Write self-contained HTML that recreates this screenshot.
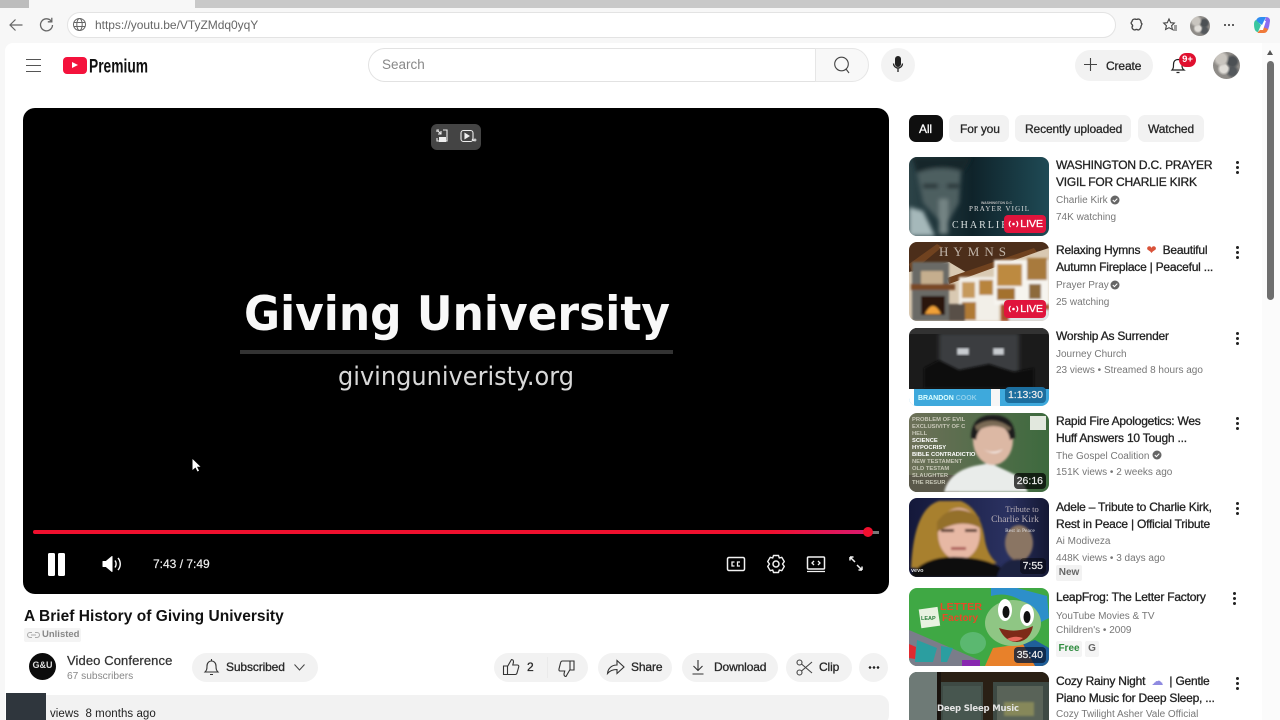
<!DOCTYPE html>
<html lang="en"><head><meta charset="utf-8"><title>A Brief History of Giving University</title>
<style>
*{box-sizing:border-box}
html,body{margin:0;padding:0;width:1280px;height:720px;overflow:hidden;background:#fff}
#w{position:relative;width:1280px;height:720px;overflow:hidden;background:#f7f7f7;font-family:"Liberation Sans",sans-serif;color:#0f0f0f}
.a{position:absolute}
.t{position:absolute;white-space:nowrap;line-height:1}
.m{font-size:12px;-webkit-text-stroke:.3px currentColor;letter-spacing:-.13px;color:#282828}
.pill{position:absolute;background:#f2f2f2;border-radius:18px}
.th{position:absolute;left:909px;width:140px;border-radius:8px;overflow:hidden}
.th svg{display:block}
.title{position:absolute;left:1056px;font-size:12px;-webkit-text-stroke:.3px #222;letter-spacing:-.22px;line-height:16.8px;color:#222;white-space:nowrap}
.sub{position:absolute;left:1056px;font-size:10px;color:#777;white-space:nowrap;line-height:1}
.dots{position:absolute;width:3px;height:13px}
.dots i{position:absolute;left:0;width:3px;height:3px;border-radius:50%;background:#222}
.dots i:nth-child(1){top:0}.dots i:nth-child(2){top:5px}.dots i:nth-child(3){top:10px}
.dur{position:absolute;background:rgba(0,0,0,.72);color:#eee;font-size:10.500px;-webkit-text-stroke:.2px #eee;border-radius:4px;padding:2px 3px;line-height:12px}
.live{position:absolute;background:#e0143c;color:#fff;font-size:10.500px;-webkit-text-stroke:.3px #fff;border-radius:4px;line-height:18px;height:18px;width:42px;text-align:right;padding-right:3px}
.live svg{position:absolute;left:4px;top:5px}
.av{background:radial-gradient(circle at 30% 25%,#c9c5bf 0 18%,transparent 30%),radial-gradient(circle at 72% 35%,#4c5054 0 16%,transparent 28%),radial-gradient(circle at 40% 62%,#e0ddd8 0 16%,transparent 28%),radial-gradient(circle at 72% 72%,#54585c 0 14%,transparent 26%),#8e8b87;border-radius:50%}
svg{overflow:visible}
</style></head><body><div id="w">
<!-- browser chrome -->
<div class="a" style="left:0;top:0;width:1280px;height:8px;background:#c9c9c9"></div>
<div class="a" style="left:29px;top:0;width:166px;height:8px;background:#f7f7f7"></div>
<div class="a" style="left:0;top:0;width:29px;height:8px;background:#bdbdbd"></div>
<svg class="a" style="left:8px;top:17px" width="18" height="16" fill="none" stroke="#666" stroke-width="1.200"><path d="M14.500 8H2M7.500 2.500 2 8l5.500 5.500"/></svg>
<svg class="a" style="left:38px;top:16px" width="17" height="17" fill="none" stroke="#666" stroke-width="1.300"><path d="M13.500 5.500A6 6 0 1 0 14.500 9"/><path d="M13.800 1.800v4h-4"/></svg>
<div class="a" style="left:67px;top:12px;width:1049px;height:26px;background:#fff;border:1px solid #e3e3e3;border-radius:13px"></div>
<svg class="a" style="left:72px;top:17px" width="15" height="15" fill="none" stroke="#666" stroke-width="1"><circle cx="7.500" cy="7.500" r="6"/><ellipse cx="7.500" cy="7.500" rx="2.700" ry="6"/><path d="M1.500 5.500h12M1.500 9.500h12"/></svg>
<div class="t" style="left:95px;top:19px;font-size:12px;letter-spacing:-.03px;color:#666">https://youtu.be/VTyZMdq0yqY</div>
<svg class="a" style="left:1129px;top:17px" width="15" height="16" fill="none" stroke="#444" stroke-width="1.300"><path d="M6 2c1 .5 2 .5 3 0 1.500 0 2.500 1 3 2.500-.2 1 .2 1.700 1 2.500-.5 1-.8 1.500-1 2.500 0 1.500-1.500 3.500-3 3.500-1-.7-2-.7-3 0-1.800 0-3-1.500-3-3 .8-.8.800-1.700 0-2.500-1.200-1-1.200-2 0-3 .2-1.500 1-2.500 3-2.500z"/></svg>
<svg class="a" style="left:1162px;top:17px" width="16" height="16" fill="none" stroke="#444" stroke-width="1.100"><path d="M7 2l1.700 3.700 3.600.4-2.700 2.600.8 3.800L7 10.700 3.600 12.500l.8-3.800L1.700 6.100l3.600-.4z"/><path d="M12 9h3M12 11h3M11 13h4"/></svg>
<div class="a av" style="left:1190px;top:16px;width:20px;height:20px"></div>
<div class="a" style="left:1223px;top:24px;width:12px;height:2px;background:radial-gradient(circle,#444 0 1px,transparent 1.100px) 0 0/4px 2px"></div>
<svg class="a" style="left:1253px;top:16px" width="18" height="19"><path d="M3 5Q4 1 8 1h5L9 9z" fill="#2f8df0"/><path d="M13 1q4 0 4 4-.500 5-2 9l-5-2z" fill="#8b6cf0"/><path d="M1 8q0-3 2-4l5 5-3 7q-4 0-4-8z" fill="#39c6a0"/><path d="M5 17q-1 0 0-1l5-5 5 2q-1 4-4 4z" fill="#f07a3a"/><path d="M7 14 11 5h2l-3 9z" fill="#fff"/></svg>
<!-- page -->
<div class="a" style="left:5px;top:43px;width:1275px;height:677px;background:#fff;border-radius:8px 0 0 0"></div>
<!-- scrollbar -->
<div class="a" style="left:1262px;top:43px;width:18px;height:677px;background:#fbfbfb"></div>
<div class="a" style="left:1267px;top:50px;width:0;height:0;border-left:3.500px solid transparent;border-right:3.500px solid transparent;border-bottom:5px solid #555"></div>
<div class="a" style="left:1267px;top:61px;width:7px;height:239px;background:#6e6e6e;border-radius:4px"></div>
<!-- masthead -->
<div class="a" style="left:26px;top:59px;width:15px;height:1px;background:#555"></div>
<div class="a" style="left:26px;top:65px;width:15px;height:1px;background:#555"></div>
<div class="a" style="left:26px;top:71px;width:15px;height:1px;background:#555"></div>
<div class="a" style="left:63px;top:57px;width:24px;height:17px;background:#f4123c;border-radius:4px"></div>
<div class="a" style="left:72px;top:62px;width:0;height:0;border-left:6px solid #fff;border-top:3.500px solid transparent;border-bottom:3.500px solid transparent"></div>
<svg class="a" style="left:89px;top:55px" width="62" height="24"><text x="0" y="17.500" font-family="Liberation Sans" font-weight="bold" font-size="19" textLength="59" lengthAdjust="spacingAndGlyphs" fill="#111">Premium</text></svg>
<div class="a" style="left:368px;top:48px;width:448px;height:34px;border:1px solid #e2e2e2;border-right:0;border-radius:17px 0 0 17px"></div>
<div class="t" style="left:382px;top:58px;font-size:13.500px;color:#888">Search</div>
<div class="a" style="left:815px;top:48px;width:54px;height:34px;border:1px solid #e6e6e6;background:#f8f8f8;border-radius:0 17px 17px 0"></div>
<svg class="a" style="left:832px;top:55px" width="20" height="20" fill="none" stroke="#444" stroke-width="1.100"><circle cx="9.500" cy="9" r="6.800"/><path d="M14 14l3 4"/></svg>
<div class="a" style="left:881px;top:48px;width:34px;height:34px;border-radius:50%;background:#f3f3f3"></div>
<svg class="a" style="left:892px;top:55px" width="12" height="20"><rect x="3" y="1" width="6" height="11" rx="3" fill="#222"/><path d="M1.500 8.500a4.500 4.500 0 0 0 9 0M6 13v4" fill="none" stroke="#222" stroke-width="1.300"/></svg>
<div class="pill" style="left:1075px;top:50px;width:78px;height:31px"></div>
<svg class="a" style="left:1083px;top:57px" width="15" height="15" stroke="#444" stroke-width="1.100"><path d="M7.500 1v13M1 7.500h13"/></svg>
<div class="t m" style="left:1106px;top:60px">Create</div>
<svg class="a" style="left:1169px;top:56px" width="18" height="19" fill="none" stroke="#222" stroke-width="1.200"><path d="M3 14c1.500-1.500 1.500-3 1.500-5.500C4.500 5 6.500 3.500 9 3.500s4 1.500 4 5c0 2.500 0 4 2 5.500zM7.500 16.500h3"/></svg>
<div class="a" style="left:1179px;top:53px;width:17px;height:14px;background:#e0102f;border-radius:7px;color:#fff;font-size:9.500px;font-weight:bold;text-align:center;line-height:14px">9+</div>
<div class="a av" style="left:1213px;top:52px;width:27px;height:27px"></div>
<!-- player -->
<div class="a" style="left:23px;top:108px;width:866px;height:486px;background:#000;border-radius:12px"></div>
<div class="a" style="left:431px;top:124px;width:50px;height:26px;background:#444;border-radius:6px"></div>
<svg class="a" style="left:434px;top:128px" width="44" height="18" fill="none" stroke="#eee" stroke-width="1.100"><path d="M3 4V2h2M9 2h4v11h-3M3 10v3h2"/><rect x="5" y="9" width="7" height="5" fill="#eee" stroke="none"/><path d="M4 3l3 3M7 3v3H4"/><rect x="27" y="2.500" width="12" height="11" rx="2.500"/><path d="M31 5.500v5l4-2.500z" fill="#eee"/><path d="M38 11l2 2M41 10.500v3M39.500 12h3"/></svg>
<svg class="a" style="left:220px;top:280px" width="480" height="120">
<text x="24" y="50" font-family="DejaVu Sans" font-weight="bold" font-size="47" textLength="426" lengthAdjust="spacingAndGlyphs" fill="#f8f8f8">Giving University</text>
<rect x="20" y="70" width="433" height="4" fill="#333"/>
<text x="118" y="105" font-family="DejaVu Sans" font-size="26" textLength="236" lengthAdjust="spacingAndGlyphs" fill="#d8d8d8">givinguniveristy.org</text>
</svg>
<svg class="a" style="left:189px;top:458px" width="12" height="15"><path d="M3.500 1v11l3-2.500 2 4 1.500-.7-2-4h3.500z" fill="#fff"/></svg>
<div class="a" style="left:33px;top:530px;width:836px;height:4px;background:linear-gradient(90deg,#f0102e 0 88%,#d81a70 100%);border-radius:2px"></div>
<div class="a" style="left:869px;top:531px;width:10px;height:2.500px;background:#777"></div>
<div class="a" style="left:863px;top:527px;width:10px;height:10px;border-radius:50%;background:#f0102e"></div>
<div class="a" style="left:48px;top:553px;width:7px;height:23px;background:#fff;border-radius:1.500px"></div>
<div class="a" style="left:58px;top:553px;width:7px;height:23px;background:#fff;border-radius:1.500px"></div>
<svg class="a" style="left:102px;top:555px" width="21" height="18"><path d="M1 6.500h3L10 1.500v15L4 11.500H1z" fill="#fff" stroke="#fff" stroke-linejoin="round"/><path d="M13 5.500c1.500 2 1.500 5 0 7M16 3c3 3.500 3 8.500 0 12" fill="none" stroke="#fff" stroke-width="1.400"/></svg>
<div class="t" style="left:153px;top:558px;font-size:12px;-webkit-text-stroke:.2px #eee;color:#eee">7:43 / 7:49</div>
<svg class="a" style="left:725px;top:554px" width="144" height="20" fill="none" stroke="#f2f2f2" stroke-width="1.500">
<rect x="2.500" y="3.500" width="17" height="13" rx="1.500"/>
<path d="M9.500 8H7v4h2.500M15 8h-2.500v4H15" stroke-width="1.300"/>
<path d="M48.500 1.500h5l.8 2.500 2.500-.7 2.500 4.300-1.800 2.400 1.800 2.400-2.500 4.300-2.500-.7-.8 2.500h-5l-.8-2.500-2.500.7-2.500-4.300 1.800-2.400-1.800-2.400 2.500-4.300 2.500.7z" stroke-width="1.400" stroke-linejoin="round"/>
<circle cx="51" cy="10" r="3"/>
<rect x="82.500" y="3" width="17" height="12" rx="1"/><path d="M82 17.500h18M89 7l-2 2 2 2M93 7l2 2-2 2" stroke-width="1.300"/>
<path d="M125 3l5 5M125 3h3.500M125 3v3.500M137 16l-5-5M137 16h-3.500M137 16v-3.500" stroke-width="1.500"/>
</svg>
<!-- below player -->
<div class="t" style="left:24px;top:609px;font-size:15.500px;font-weight:bold;color:#111;letter-spacing:.03px">A Brief History of Giving University</div>
<div class="a" style="left:24px;top:628px;width:57px;height:14px;background:#f4f4f4;border-radius:2px"></div>
<svg class="a" style="left:27px;top:631px" width="13" height="8" fill="none" stroke="#aaa" stroke-width="1"><path d="M5 1.500H3a2.500 2.500 0 0 0 0 5h2M8 1.500h2a2.500 2.500 0 0 1 0 5H8M4 4h5"/></svg>
<div class="t" style="left:42px;top:630px;font-size:9.500px;font-weight:bold;color:#888">Unlisted</div>
<div class="a" style="left:29px;top:653px;width:27px;height:27px;border-radius:50%;background:#0b0b0b;color:#ddd;font-size:9px;font-weight:bold;text-align:center;line-height:25px">G&amp;U</div>
<div class="t" style="left:67px;top:654px;font-size:13px;letter-spacing:.1px;color:#333;-webkit-text-stroke:.25px #333">Video Conference</div>
<div class="t" style="left:67px;top:671px;font-size:10.200px;color:#888;margin-top:1px">67 subscribers</div>
<div class="pill" style="left:192px;top:653px;width:126px;height:29px"></div>
<svg class="a" style="left:203px;top:658px" width="17" height="20" fill="none" stroke="#333" stroke-width="1.100"><path d="M2 14c1.500-1.500 2-2.500 2-6 0-3 2-5 4.500-5s4.500 2 4.500 5c0 3.500.5 4.500 2 6zM8.500 1v2M7 16.500h3"/></svg>
<div class="t m" style="left:226px;top:661px">Subscribed</div>
<svg class="a" style="left:293px;top:663px" width="13" height="9" fill="none" stroke="#444" stroke-width="1"><path d="M1.500 1.500 6.500 7l5-5.500"/></svg>
<div class="pill" style="left:494px;top:653px;width:94px;height:29px"></div>
<div class="a" style="left:547px;top:657px;width:1px;height:21px;background:#eaeaea"></div>
<svg class="a" style="left:502px;top:658px" width="18" height="18" fill="none" stroke="#333" stroke-width="1.100"><path d="M1.500 8h4v8.500h-4zM5.500 8.500 9.500 1.500c1.500 0 2 1 2 2.500l-.7 3h4.700c1 0 1.500 1 1.200 2l-1.700 6c-.2.800-.8 1.500-1.800 1.500H5.500"/></svg>
<div class="t m" style="left:527px;top:661px">2</div>
<svg class="a" style="left:558px;top:660px" width="17" height="18" fill="none" stroke="#333" stroke-width="1.100"><path d="M12 1h4v9h-4zM12 9.500 8 16.500c-1.500 0-2-1-2-2.500l.7-3H2c-1 0-1.200-1-1-2l1.500-6C2.700 2 3.300 1 4.500 1H12"/></svg>
<div class="pill" style="left:598px;top:653px;width:74px;height:29px"></div>
<svg class="a" style="left:606px;top:659px" width="19" height="17" fill="none" stroke="#333" stroke-width="1.100"><path d="M11 1.500 18 8l-7 6.500v-4c-4 0-7 1-9.500 4 .5-5 4-8.500 9.500-8.500z"/></svg>
<div class="t m" style="left:631px;top:661px">Share</div>
<div class="pill" style="left:682px;top:653px;width:96px;height:29px"></div>
<svg class="a" style="left:691px;top:659px" width="14" height="17" fill="none" stroke="#333" stroke-width="1.100"><path d="M7 1v10M2.500 7 7 11.500 11.500 7M1.500 15h11"/></svg>
<div class="t m" style="left:714px;top:661px">Download</div>
<div class="pill" style="left:786px;top:653px;width:66px;height:29px"></div>
<svg class="a" style="left:796px;top:659px" width="17" height="17" fill="none" stroke="#444" stroke-width="1.100"><circle cx="3.500" cy="3.500" r="2.500"/><circle cx="3.500" cy="13.500" r="2.500"/><path d="M5.500 5 16 14M5.500 12 16 3"/></svg>
<div class="t m" style="left:819px;top:661px">Clip</div>
<div class="a" style="left:859px;top:653px;width:29px;height:29px;border-radius:50%;background:#f2f2f2"></div>
<div class="a" style="left:868px;top:666px;width:12px;height:3px;background:radial-gradient(circle,#222 0 1.200px,transparent 1.400px) 0 0/4px 3px"></div>
<div class="a" style="left:24px;top:695px;width:865px;height:30px;background:#f2f2f2;border-radius:10px"></div>
<div class="a" style="left:6px;top:693px;width:40px;height:27px;background:#2f363d"></div>
<div class="t" style="left:50px;top:709px;font-size:11.500px;letter-spacing:.05px;color:#222">views&nbsp; 8 months ago</div>
<!-- chips -->
<div class="a" style="left:909px;top:115px;width:34px;height:27px;background:#0f0f0f;border-radius:7px"></div>
<div class="t m" style="left:919px;top:123px;color:#fff">All</div>
<div class="a" style="left:949px;top:115px;width:60px;height:27px;background:#f2f2f2;border-radius:7px"></div>
<div class="t m" style="left:960px;top:123px">For you</div>
<div class="a" style="left:1015px;top:115px;width:116px;height:27px;background:#f2f2f2;border-radius:7px"></div>
<div class="t m" style="left:1025px;top:123px">Recently uploaded</div>
<div class="a" style="left:1138px;top:115px;width:66px;height:27px;background:#f2f2f2;border-radius:7px"></div>
<div class="t m" style="left:1148px;top:123px">Watched</div>
<!-- thumb 1 -->
<div class="th" style="top:157px;height:79px"><svg width="140" height="79">
<defs><linearGradient id="g1" x1="0" x2="1" y1="0" y2="0"><stop offset="0" stop-color="#2c4347"/><stop offset=".45" stop-color="#0f232a"/><stop offset="1" stop-color="#1f4a55"/></linearGradient><filter id="b1"><feGaussianBlur stdDeviation="2"/></filter><filter id="b2"><feGaussianBlur stdDeviation="1"/></filter></defs>
<rect width="140" height="79" fill="url(#g1)"/>
<g filter="url(#b1)"><path d="M8 16Q30 8 52 14L50 46 36 70 14 46z" fill="#4e5e60"/><path d="M3 0h60L55 14Q30 6 8 16z" fill="#16262a"/><path d="M14 27h15v4H14zM38 27h12v4H38z" fill="#1a2a2e"/><path d="M30 42h9v35h-9z" fill="#748484"/><path d="M0 50l14 4 12 25H0z" fill="#a5b8ba"/></g>
<text x="72" y="47" font-family="Liberation Sans" font-size="3.500" font-weight="bold" fill="#bbb">WASHINGTON D.C</text>
<text x="60" y="54" font-family="Liberation Serif" font-size="7" fill="#ddd" textLength="60">PRAYER VIGIL</text>
<text x="43" y="71" font-family="Liberation Serif" font-size="10" fill="#d9e0e0" letter-spacing="2">CHARLIE</text>
</svg><div class="live" style="right:3px;bottom:3px"><svg width="11" height="8" fill="none" stroke="#fff" stroke-width="1.200"><path d="M2.500 1Q0 4 2.500 7M8.500 1Q11 4 8.500 7"/><circle cx="5.500" cy="4" r="1.300" fill="#fff" stroke="none"/></svg>LIVE</div></div>
<!-- thumb 2 -->
<div class="th" style="top:242px;height:79px"><svg width="140" height="79">
<rect width="140" height="79" fill="#d9c9b2"/>
<path d="M0 0h140v6L60 32 40 20 0 30z" fill="#4c2e1a"/><path d="M0 22 28 2l5 3L3 30zM38 36 125 6l3 4-88 32z" fill="#70421f"/>
<g filter="url(#b2)"><rect x="3" y="20" width="37" height="59" fill="#6a6a66"/><rect x="12" y="29" width="22" height="16" fill="#c5ae8e"/><rect x="2" y="42" width="44" height="6" fill="#7a4a26"/><rect x="12" y="54" width="24" height="19" fill="#2a1710"/><path d="M16 72q8-16 16 0z" fill="#f0a037"/>
<rect x="50" y="35" width="40" height="44" fill="#f2efe8"/><rect x="53" y="40" width="13" height="16" fill="#c69a5b"/><rect x="70" y="38" width="14" height="15" fill="#b8843e"/><rect x="53" y="60" width="14" height="18" fill="#b07a36"/>
<rect x="85" y="18" width="55" height="45" fill="#f6f4ef"/><rect x="88" y="22" width="25" height="22" fill="#bd8a40"/><rect x="118" y="16" width="20" height="22" fill="#a87a3d"/><rect x="88" y="46" width="18" height="12" fill="#a3712e"/><rect x="120" y="42" width="12" height="15" fill="#8d6a3b"/>
<rect x="92" y="62" width="48" height="17" fill="#a8522c"/><rect x="100" y="68" width="40" height="11" fill="#dfe3e6"/><rect x="40" y="62" width="16" height="17" fill="#595046"/></g>
<text x="30" y="14" font-family="Liberation Serif" font-size="13" fill="#f0ece4" letter-spacing="5" opacity=".7">HYMNS</text>
</svg><div class="live" style="right:3px;bottom:3px"><svg width="11" height="8" fill="none" stroke="#fff" stroke-width="1.200"><path d="M2.500 1Q0 4 2.500 7M8.500 1Q11 4 8.500 7"/><circle cx="5.500" cy="4" r="1.300" fill="#fff" stroke="none"/></svg>LIVE</div></div>
<!-- thumb 3 -->
<div class="th" style="top:328px;height:78px"><svg width="140" height="78">
<rect width="140" height="61" fill="#1b1b1b"/><rect x="30" y="5" width="80" height="40" fill="#3b3e40" filter="url(#b1)"/><rect x="48" y="20" width="12" height="7" fill="#c8ccd0" filter="url(#b2)"/><rect x="84" y="20" width="11" height="7" fill="#c8ccd0" filter="url(#b2)"/><rect x="0" y="0" width="140" height="6" fill="#323232"/>
<path d="M15 60V40l15-8 20 10 30-6 25 8 20-4v20z" fill="#0a0a0a" filter="url(#b2)"/>
<rect y="61" width="140" height="17" fill="#3ea9dc"/><rect x="0" y="61" width="5" height="17" fill="#fff"/><text x="9" y="72" font-family="Liberation Sans" font-size="7" font-weight="bold" fill="#dff">BRANDON <tspan fill="#8fd0ec">COOK</tspan></text><rect x="82" y="61" width="9" height="17" fill="#f6f6f6"/>
</svg><div class="dur" style="right:3px;bottom:3px;background:#1c6e9e">1:13:30</div></div>
<!-- thumb 4 -->
<div class="th" style="top:413px;height:79px"><svg width="140" height="79">
<defs><linearGradient id="g4" x1="0" x2="1"><stop offset="0" stop-color="#6d7058"/><stop offset="1" stop-color="#3d6a3e"/></linearGradient></defs>
<rect width="140" height="79" fill="url(#g4)"/>
<rect x="0" y="62" width="50" height="17" fill="#5a584a"/>
<g font-family="Liberation Sans" font-size="5.800" font-weight="bold" fill="#c8c8b8"><text x="3" y="8">PROBLEM OF EVIL</text><text x="3" y="15">EXCLUSIVITY OF C</text><text x="3" y="22">HELL</text><text x="3" y="29" fill="#fff">SCIENCE</text><text x="3" y="36" fill="#fff">HYPOCRISY</text><text x="3" y="43" fill="#fff">BIBLE CONTRADICTIO</text><text x="3" y="50">NEW TESTAMENT</text><text x="3" y="57">OLD TESTAM</text><text x="3" y="64">SLAUGHTER</text><text x="3" y="71">THE RESUR</text></g>
<g filter="url(#b2)"><path d="M35 79q5-20 30-26l16-3 30 14 8 15z" fill="#e9ecea"/><ellipse cx="84" cy="27" rx="20" ry="25" fill="#dcb8a4"/><path d="M62 25q0-23 22-23t22 23l-5 2q-2-15-17-15T67 27z" fill="#1d1d1d"/><path d="M66 13q18-12 36 2l-2 3Q85 8 68 18z" fill="#7a6a55"/><path d="M74 36q10 6 20 0-8 8-20 0z" fill="#fff"/></g>
<rect x="121" y="3" width="16" height="14" fill="#e2e8de"/>
</svg><div class="dur" style="right:3px;bottom:3px">26:16</div></div>
<!-- thumb 5 -->
<div class="th" style="top:498px;height:79px"><svg width="140" height="79">
<defs><linearGradient id="g5" x1="0" x2="1"><stop offset="0" stop-color="#14183a"/><stop offset=".7" stop-color="#2a3160"/><stop offset="1" stop-color="#141834"/></linearGradient></defs>
<rect width="140" height="79" fill="url(#g5)"/>
<g filter="url(#b2)"><path d="M2 70Q5 10 30 3h22q20 8 24 40 3 15 12 22L50 70z" fill="#a8802f"/><ellipse cx="50" cy="36" rx="21" ry="26" fill="#e7b8a4"/><path d="M28 24q15-22 42-5 2 10 3 12-20-12-45 3z" fill="#94702a"/><path d="M0 79q15-22 50-20 40 2 50 20z" fill="#111"/>
<path d="M32 31h13v3H32zM56 31h12v3H56z" fill="#5b3d30"/><path d="M42 49h15v3H42z" fill="#ad5e5a"/>
<ellipse cx="110" cy="45" rx="14" ry="18" fill="#8a7564"/><path d="M88 79q4-18 22-18t24 18z" fill="#1c2440"/></g>
<g font-family="Liberation Serif" fill="#b5adb5" text-anchor="middle"><text x="113" y="14" font-size="8.500">Tribute to</text><text x="106" y="24" font-size="9.500">Charlie Kirk</text><text x="111" y="34" font-size="5.500" fill="#ddd">Rest in Peace</text></g>
<text x="2" y="74" font-family="Liberation Sans" font-size="5.500" font-weight="bold" fill="#ddd">vevo</text>
</svg><div class="dur" style="right:3px;bottom:3px;background:rgba(0,0,0,.45)">7:55</div></div>
<!-- thumb 6 -->
<div class="th" style="top:588px;height:78px"><svg width="140" height="78">
<rect width="140" height="78" fill="#3fa844"/>
<path d="M0 42 70 72v6H0z" fill="#7a7d8a"/>
<path d="M8 52l20 8-4 14H6zM32 58l12 2-6 14h-6z" fill="#2b9ea0"/><path d="M0 56l7 3-1 12-6-1z" fill="#e02a30"/><rect x="53" y="72" width="18" height="6" fill="#8828b0"/>
<path d="M82 0h26l30 8 2 22-8 4Q110 0 82 8z" fill="#2d8fca"/>
<path d="M84 60l42-6 14 10v14H76z" fill="#e8812a"/><path d="M114 56l12-4 14 8v18h-14z" fill="#1f5f9a"/>
<ellipse cx="104" cy="35" rx="28" ry="23" fill="#8fc684"/>
<ellipse cx="96" cy="22" rx="7" ry="11" fill="#fff"/><ellipse cx="118" cy="27" rx="7" ry="11" fill="#fff"/><ellipse cx="97" cy="24" rx="3.500" ry="6" fill="#111"/><ellipse cx="118" cy="29" rx="3.500" ry="6" fill="#111"/>
<path d="M90 40q17 6 34-2-3 15-16 16-12 0-18-14z" fill="#7d2a18"/><path d="M98 51q8-4 16-1-8 6-16 1z" fill="#e86a5c"/>
<ellipse cx="64" cy="55" rx="13" ry="11" fill="#5bb870"/>
<g font-family="Liberation Sans" font-weight="bold" fill="#e84a26"><text x="31" y="22" font-size="10.500" textLength="42">LETTER</text><text x="33" y="33" font-size="10" textLength="36">Factory</text></g>
<rect x="11" y="20" width="19" height="19" fill="#e8f2e0" transform="rotate(-8 21 30)"/><text x="12" y="32" font-family="Liberation Sans" font-weight="bold" font-size="5.500" fill="#2a7d3a">LEAP</text>
</svg><div class="dur" style="right:3px;bottom:3px;background:rgba(10,30,60,.8)">35:40</div></div>
<!-- thumb 7 -->
<div class="th" style="top:672px;height:80px"><svg width="140" height="80">
<rect width="140" height="80" fill="#3e4a44"/><rect x="0" y="0" width="28" height="80" fill="#6e7a76"/><rect x="28" y="0" width="112" height="10" fill="#2a2015"/><rect x="28" y="0" width="4" height="80" fill="#1a140f"/><rect x="74" y="10" width="10" height="70" fill="#2a2015"/><rect x="34" y="14" width="38" height="60" fill="#47564f"/><rect x="88" y="14" width="46" height="60" fill="#596358"/><rect x="95" y="30" width="30" height="14" fill="#86885a" filter="url(#b2)"/>
<text x="28" y="39" font-family="DejaVu Sans" font-weight="bold" font-size="8.500" fill="#e4e4e4" textLength="82">Deep Sleep Music</text>
</svg></div>
<!-- meta -->
<div class="title" style="top:157px">WASHINGTON D.C. PRAYER<br>VIGIL FOR CHARLIE KIRK</div>
<div class="sub" style="top:196px">Charlie Kirk</div>
<svg class="a" style="left:1110px;top:195px" width="10" height="10"><circle cx="5" cy="5" r="4.500" fill="#666"/><path d="M2.800 5l1.600 1.600 2.900-3" stroke="#fff" fill="none"/></svg>
<div class="sub" style="top:213px">74K watching</div>
<div class="dots" style="left:1236px;top:161px"><i></i><i></i><i></i></div>
<div class="title" style="top:242px">Relaxing Hymns &nbsp;<span style="color:#d9533a;-webkit-text-stroke:0">❤</span>&nbsp; Beautiful<br>Autumn Fireplace | Peaceful ...</div>
<div class="sub" style="top:281px">Prayer Pray</div>
<svg class="a" style="left:1110px;top:280px" width="10" height="10"><circle cx="5" cy="5" r="4.500" fill="#666"/><path d="M2.800 5l1.600 1.600 2.900-3" stroke="#fff" fill="none"/></svg>
<div class="sub" style="top:298px">25 watching</div>
<div class="dots" style="left:1236px;top:246px"><i></i><i></i><i></i></div>
<div class="title" style="top:328px">Worship As Surrender</div>
<div class="sub" style="top:350px">Journey Church</div>
<div class="sub" style="top:366px">23 views • Streamed 8 hours ago</div>
<div class="dots" style="left:1236px;top:332px"><i></i><i></i><i></i></div>
<div class="title" style="top:413px">Rapid Fire Apologetics: Wes<br>Huff Answers 10 Tough ...</div>
<div class="sub" style="top:452px">The Gospel Coalition</div>
<svg class="a" style="left:1152px;top:450px" width="10" height="10"><circle cx="5" cy="5" r="4.500" fill="#666"/><path d="M2.800 5l1.600 1.600 2.900-3" stroke="#fff" fill="none"/></svg>
<div class="sub" style="top:468px">151K views • 2 weeks ago</div>
<div class="dots" style="left:1236px;top:417px"><i></i><i></i><i></i></div>
<div class="title" style="top:499px">Adele – Tribute to Charlie Kirk,<br>Rest in Peace | Official Tribute</div>
<div class="sub" style="top:537px">Ai Modiveza</div>
<div class="sub" style="top:554px">448K views • 3 days ago</div>
<div class="a" style="left:1056px;top:565px;width:26px;height:16px;background:#f2f2f2;border-radius:2px;color:#666;font-size:10px;font-weight:bold;text-align:center;line-height:16px">New</div>
<div class="dots" style="left:1236px;top:502px"><i></i><i></i><i></i></div>
<div class="title" style="top:589px">LeapFrog: The Letter Factory</div>
<div class="sub" style="top:612px">YouTube Movies &amp; TV</div>
<div class="sub" style="top:626px">Children's • 2009</div>
<div class="a" style="left:1056px;top:641px;width:26px;height:16px;background:#f4f4f4;border-radius:2px;color:#2e8b3e;font-size:10px;font-weight:bold;text-align:center;line-height:16px">Free</div>
<div class="a" style="left:1085px;top:641px;width:14px;height:16px;background:#f4f4f4;border-radius:2px;color:#666;font-size:10px;font-weight:bold;text-align:center;line-height:16px">G</div>
<div class="dots" style="left:1233px;top:592px"><i></i><i></i><i></i></div>
<div class="title" style="top:673px">Cozy Rainy Night &nbsp;<span style="color:#8f8ae0;-webkit-text-stroke:0">☁</span>&nbsp; | Gentle<br>Piano Music for Deep Sleep, ...</div>
<div class="sub" style="top:710px">Cozy Twilight Asher Vale Official</div>
<div class="dots" style="left:1236px;top:677px"><i></i><i></i><i></i></div>
</div></body></html>
